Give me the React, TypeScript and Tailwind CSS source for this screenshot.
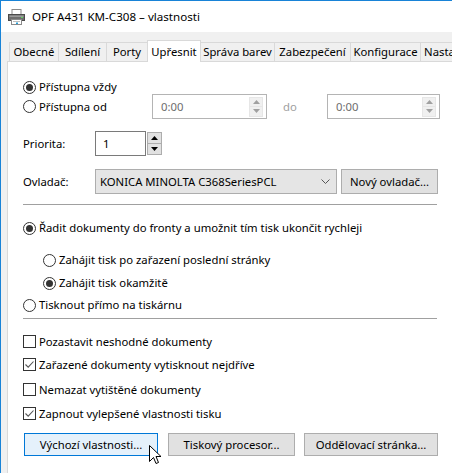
import React from "react";

const font = { fontFamily: '"Noto Sans", "Open Sans", sans-serif' };

function Radio({ checked, label }: { checked?: boolean; label: string }) {
  return (
    <div className="flex items-center h-[14px]">
      <div className="w-[13px] h-[13px] rounded-full border border-[#333333] bg-white flex items-center justify-center shrink-0">
        {checked && <div className="w-[7px] h-[7px] rounded-full bg-[#333333]" />}
      </div>
      <span className="ml-[3px] whitespace-nowrap">{label}</span>
    </div>
  );
}

function Check({ checked, label }: { checked?: boolean; label: string }) {
  return (
    <div className="flex items-center h-[13px]">
      <div className="w-[13px] h-[13px] border border-[#333333] bg-white flex items-center justify-center shrink-0">
        {checked && (
          <svg width="11" height="11" viewBox="0 0 11 11">
            <path d="M1.5 5.5 L4.2 8.2 L9.5 2.5" fill="none" stroke="#555555" strokeWidth="1.1" />
          </svg>
        )}
      </div>
      <span className="ml-[3px] whitespace-nowrap">{label}</span>
    </div>
  );
}

function SpinArrows({ disabled }: { disabled?: boolean }) {
  const c = disabled ? "#a0a0a0" : "#000000";
  const box = disabled ? "border-[#e6e6e6] bg-[#f0f0f0]" : "border-[#adadad] bg-[#e1e1e1]";
  return (
    <div className="flex flex-col w-[14px] h-[20px]">
      <div className={`flex-1 flex items-center justify-center border ${box}`}>
        <svg width="7" height="4" viewBox="0 0 7 4"><path d="M0 4 L3.5 0 L7 4 Z" fill={c} /></svg>
      </div>
      <div className={`flex-1 flex items-center justify-center border border-t-0 ${box}`}>
        <svg width="7" height="4" viewBox="0 0 7 4"><path d="M0 0 L3.5 4 L7 0 Z" fill={c} /></svg>
      </div>
    </div>
  );
}

function TimeBox({ w }: { w: string }) {
  return (
    <div className={`${w} h-[25px] border border-[#b4b4b4] bg-white flex items-center justify-between pl-[8px] pr-[3px] text-[#6d6d6d]`}>
      <span>0:00</span>
      <SpinArrows disabled />
    </div>
  );
}

function Printer() {
  return (
    <svg width="17" height="16" viewBox="0 0 17 16">
      <rect x="4" y="0.5" width="9" height="5" fill="#ffffff" stroke="#8a8a8a" />
      <rect x="0.5" y="5.5" width="16" height="6" fill="#6e6e6e" stroke="#4a4a4a" />
      <rect x="1.5" y="6.5" width="14" height="1.5" fill="#9a9a9a" />
      <rect x="3.5" y="10.5" width="10" height="5" fill="#ffffff" stroke="#8a8a8a" />
      <rect x="5" y="12" width="7" height="1" fill="#bdbdbd" />
      <rect x="8" y="13.5" width="2" height="1.5" fill="#2a9fd8" />
      <rect x="13" y="8" width="2" height="1" fill="#5fd35f" />
    </svg>
  );
}

function Cursor() {
  return (
    <svg width="13" height="20" viewBox="0 0 13 20" className="absolute left-[148px] top-[444px]">
      <path
        d="M0.5 0.5 L0.5 16.5 L4.5 12.5 L7 18.5 L9.5 17.5 L7 11.5 L12 11.5 Z"
        fill="#ffffff"
        stroke="#000000"
        strokeWidth="1"
      />
    </svg>
  );
}

const tabs: { label: string; w: string; sel?: boolean }[] = [
  { label: "Obecné", w: "w-[49px]" },
  { label: "Sdílení", w: "w-[48px]" },
  { label: "Porty", w: "w-[41px]" },
  { label: "Upřesnit", w: "w-[54px]", sel: true },
  { label: "Správa barev", w: "w-[74px]" },
  { label: "Zabezpečení", w: "w-[76px]" },
  { label: "Konfigurace", w: "w-[70px]" },
  { label: "Nastavení", w: "w-[60px]" },
];

export default function App() {
  return (
    <div
      className="relative w-[452px] h-[473px] overflow-hidden bg-[#f0f0f0] border-l border-t border-[#1883d7] text-[11.3px] text-black leading-none"
      style={font}
    >
      {/* Title bar */}
      <div className="h-[31px] bg-white flex items-center pl-[7px]">
        <Printer />
        <span className="ml-[7px] text-[11.6px] whitespace-nowrap">OPF A431 KM-C308 – vlastnosti</span>
      </div>

      {/* Body */}
      <div className="pl-[6px] pt-[8px]">
        {/* Tabs */}
        <div className="flex items-end h-[21px] pl-[2px] relative z-10">
          {tabs.map((t) =>
            t.sel ? (
              <div
                key={t.label}
                className={`${t.w} h-[22px] bg-white border-l border-t border-r border-[#d9d9d9] flex justify-center pt-[5px] shrink-0 -mb-[1px] -mr-[1px]`}
              >
                <span className="whitespace-nowrap">{t.label}</span>
              </div>
            ) : (
              <div
                key={t.label}
                className={`${t.w} h-[19px] border-l border-t border-[#d9d9d9] flex items-center justify-center shrink-0`}
              >
                <span className="whitespace-nowrap">{t.label}</span>
              </div>
            )
          )}
        </div>

        {/* Panel */}
        <div className="w-[470px] h-[420px] bg-white border-l border-t border-[#d9d9d9] pl-[15px] pt-[18px]">
          <Radio checked label="Přístupna vždy" />
          <div className="flex items-center h-[25px]">
            <div className="w-[129px]">
              <Radio label="Přístupna od" />
            </div>
            <TimeBox w="w-[115px]" />
            <div className="w-[60px] pl-[16px] text-[#a0a0a0]">do</div>
            <TimeBox w="w-[113px]" />
          </div>

          <div className="flex items-center h-[25px] mt-[12px]">
            <div className="w-[72px]">Priorita:</div>
            <div className="w-[51px] h-[25px] border border-[#7a7a7a] bg-white flex items-center pl-[7px]">1</div>
            <div className="ml-[1px] w-[15px] h-[23px] flex flex-col">
              <div className="flex-1 flex items-center justify-center border border-[#adadad] bg-[#e1e1e1]">
                <svg width="7" height="4" viewBox="0 0 7 4"><path d="M0 4 L3.5 0 L7 4 Z" fill="#000" /></svg>
              </div>
              <div className="flex-1 flex items-center justify-center border border-t-0 border-[#adadad] bg-[#e1e1e1]">
                <svg width="7" height="4" viewBox="0 0 7 4"><path d="M0 0 L3.5 4 L7 0 Z" fill="#000" /></svg>
              </div>
            </div>
          </div>

          <div className="flex items-center h-[25px] mt-[13px]">
            <div className="w-[72px]">Ovladač:</div>
            <div className="w-[242px] h-[25px] border border-[#adadad] bg-[#e5e5e5] flex items-center justify-between pl-[4px] pr-[6px]">
              <span className="whitespace-nowrap">KONICA MINOLTA C368SeriesPCL</span>
              <svg width="9" height="5" viewBox="0 0 9 5"><path d="M0.5 0.5 L4.5 4.5 L8.5 0.5" fill="none" stroke="#555" /></svg>
            </div>
            <div className="ml-[4px] w-[97px] h-[25px] border border-[#adadad] bg-[#e1e1e1] flex items-center justify-center whitespace-nowrap">
              Nový ovladač...
            </div>
          </div>

          <div className="mt-[10px] w-[414px] h-px bg-[#a0a0a0]" />

          <div className="mt-[16px]">
            <Radio checked label="Řadit dokumenty do fronty a umožnit tím tisk ukončit rychleji" />
          </div>
          <div className="mt-[18px] ml-[20px]">
            <Radio label="Zahájit tisk po zařazení poslední stránky" />
          </div>
          <div className="mt-[9px] ml-[20px]">
            <Radio checked label="Zahájit tisk okamžitě" />
          </div>
          <div className="mt-[8px]">
            <Radio label="Tisknout přímo na tiskárnu" />
          </div>

          <div className="mt-[6px] w-[414px] h-px bg-[#a0a0a0]" />

          <div className="mt-[16px]">
            <Check label="Pozastavit neshodné dokumenty" />
          </div>
          <div className="mt-[10px]">
            <Check checked label="Zařazené dokumenty vytisknout nejdříve" />
          </div>
          <div className="mt-[12px]">
            <Check label="Nemazat vytištěné dokumenty" />
          </div>
          <div className="mt-[11px]">
            <Check checked label="Zapnout vylepšené vlastnosti tisku" />
          </div>

          <div className="mt-[13px] flex pl-[1px]">
            <div className="w-[134px] h-[23px] border border-[#0078d7] bg-[#e5f1fb] flex items-center justify-center whitespace-nowrap">
              Výchozí vlastnosti...
            </div>
            <div className="ml-[10px] w-[127px] h-[23px] border border-[#adadad] bg-[#e1e1e1] flex items-center justify-center whitespace-nowrap">
              Tiskový procesor...
            </div>
            <div className="ml-[9px] w-[134px] h-[23px] border border-[#adadad] bg-[#e1e1e1] flex items-center justify-center whitespace-nowrap">
              Oddělovací stránka...
            </div>
          </div>
        </div>
      </div>
      <Cursor />
    </div>
  );
}
